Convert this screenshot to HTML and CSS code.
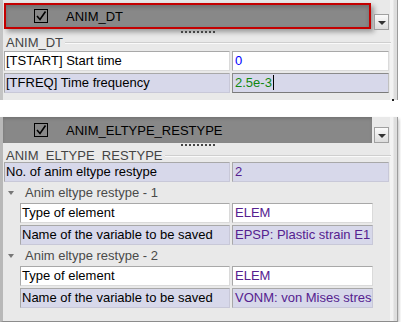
FILE: index.html
```html
<!DOCTYPE html>
<html lang="en">
<head>
    <meta charset="UTF-8">
    <title>Animation settings</title>
    <link rel="stylesheet" href="styles.css">
</head>
<body>

<div class="panel panel-first">
    <div class="panel-head">
        <div class="title-bar selected">
            <svg class="check" width="14" height="14" viewBox="0 0 14 14">
                <rect x="0.5" y="0.5" width="13" height="13" fill="none" stroke="#000"/>
                <path d="M3 7 L6 10.5 L11.5 2.5" fill="none" stroke="#000" stroke-width="1.6"/>
            </svg>
            <span>ANIM_DT</span>
        </div>
        <div class="drop"><span class="arrow"></span></div>
    </div>
    <div class="grip"></div>
    <div class="legend"><span>ANIM_DT</span></div>
    <div class="rows">
        <div class="row">
            <div class="cell">[TSTART] Start time</div>
            <div class="cell value blue">0</div>
        </div>
        <div class="row alt">
            <div class="cell">[TFREQ] Time frequency</div>
            <div class="cell value green focus">2.5e-3<span class="caret"></span></div>
        </div>
    </div>
    <div class="corner"></div>
</div>

<div class="panel panel-second">
    <div class="panel-head">
        <div class="title-bar">
            <svg class="check" width="14" height="14" viewBox="0 0 14 14">
                <rect x="0.5" y="0.5" width="13" height="13" fill="none" stroke="#000"/>
                <path d="M3 7 L6 10.5 L11.5 2.5" fill="none" stroke="#000" stroke-width="1.6"/>
            </svg>
            <span>ANIM_ELTYPE_RESTYPE</span>
        </div>
        <div class="drop"><span class="arrow"></span></div>
    </div>
    <div class="grip"></div>
    <div class="legend"><span>ANIM_ELTYPE_RESTYPE</span></div>
    <div class="rows">
        <div class="row alt">
            <div class="cell">No. of anim eltype restype</div>
            <div class="cell value purple">2</div>
        </div>

        <div class="sub-head"><span class="tri"></span>Anim eltype restype - 1</div>
        <div class="row nested">
            <div class="cell">Type of element</div>
            <div class="cell value purple">ELEM</div>
        </div>
        <div class="row nested alt">
            <div class="cell">Name of the variable to be saved</div>
            <div class="cell value purple">EPSP: Plastic strain E1</div>
        </div>

        <div class="sub-head"><span class="tri"></span>Anim eltype restype - 2</div>
        <div class="row nested">
            <div class="cell">Type of element</div>
            <div class="cell value purple">ELEM</div>
        </div>
        <div class="row nested alt">
            <div class="cell">Name of the variable to be saved</div>
            <div class="cell value purple">VONM: von Mises stress</div>
        </div>
    </div>
</div>

</body>
</html>
```

FILE: styles.css
```css
body {
    margin: 0;
    background: #fff;
    font-family: "Liberation Sans", Arial, sans-serif;
    font-size: 13px;
    color: #000;
}

.panel {
    position: relative;
    width: 394px;
    display: flex;
    flex-direction: column;
    border-left: 3px solid #c4c4c4;
    border-right: 1px solid #9c9c9c;
    background: linear-gradient(to right, #e9e9e9 387px, #f3f3f3 387px, #f3f3f3 390px, #dedede 391px);
}

.panel-first {
    padding-top: 3px;
    height: 97px;
}

.panel-second {
    margin-top: 17px;
    height: 204px;
    border-left-color: #b8b8b8;
    border-bottom: 1px solid #8c8c8c;
    box-shadow: 1px 2px 3px rgba(0, 0, 0, 0.25);
}

.panel-head {
    display: flex;
    align-items: flex-end;
}

.title-bar {
    width: 369px;
    height: 26px;
    box-sizing: border-box;
    display: flex;
    align-items: center;
    background: #888;
    box-shadow: inset 0 2px 3px rgba(0, 0, 0, 0.15);
    font-size: 13px;
    color: #000;
}

.title-bar.selected {
    width: 367px;
    margin-left: 1px;
    border: 2px solid #c40000;
    box-shadow: inset 0 2px 4px rgba(0, 0, 0, 0.2), 3px 3px 5px rgba(0, 0, 0, 0.35);
}

.check {
    margin-left: 31px;
    margin-right: 18px;
}

.title-bar.selected .check {
    margin-left: 28px;
}

.drop {
    width: 15px;
    height: 16px;
    box-sizing: border-box;
    margin-left: 2px;
    border: 1px solid #a0a0a0;
    background: linear-gradient(#fafafa, #dcdcdc);
    display: flex;
    justify-content: center;
    align-items: center;
}

.panel-first .drop {
    margin-left: 3px;
    margin-bottom: -1px;
}

.arrow {
    width: 0;
    height: 0;
    margin-top: 2px;
    border-left: 4px solid transparent;
    border-right: 4px solid transparent;
    border-top: 4px solid #333;
}

.grip {
    width: 35px;
    height: 2px;
    margin: 2px 0 0 178px;
    background: repeating-linear-gradient(to right, #444 0, #444 2px, transparent 2px, transparent 4px);
}

.panel-second .grip {
    margin-top: 1px;
}

.legend {
    display: flex;
    align-items: center;
    margin: 2px 0 0 3px;
    width: 385px;
    height: 15px;
    color: #444;
}

.legend::after {
    content: "";
    flex: 1;
    margin-left: 2px;
    border-top: 1px solid #cfcfcf;
    border-bottom: 1px solid #fafafa;
}

.rows {
    display: flex;
    flex-direction: column;
    gap: 2px;
    margin: 0 0 0 1px;
}

.panel-first .rows {
    margin-top: 1px;
}

.panel-second .rows {
    margin-top: -1px;
}

.row {
    display: grid;
    grid-template-columns: 226px 157px;
    column-gap: 2px;
    height: 20px;
}

.row.nested {
    margin-left: 16px;
    grid-template-columns: 210px 141px;
}

.cell {
    box-sizing: border-box;
    height: 20px;
    line-height: 18px;
    padding-left: 1px;
    background: #fff;
    border: 1px solid;
    border-color: #a8a8a8 #dadada #dadada #a8a8a8;
    white-space: nowrap;
    overflow: hidden;
}

.row.alt .cell {
    background: #d7d8ea;
    border-color: #a8a8a8 #c8c8d8 #c8c8d8 #a8a8a8;
}

.value {
    padding-left: 2px;
}

.blue { color: #0000ff; }
.green { color: #118811; }
.purple { color: #55218f; }

.row.alt .cell.focus {
    border-color: #8a8a8a #c0c0c0 #7a7a7a #8a8a8a;
}

.caret {
    display: inline-block;
    width: 1px;
    height: 15px;
    margin-left: 1px;
    vertical-align: -3px;
    background: #000;
}

.sub-head {
    height: 17px;
    display: flex;
    align-items: center;
    color: #4a4a4a;
    padding-left: 4px;
}

.tri {
    width: 0;
    height: 0;
    margin-right: 11px;
    margin-top: 1px;
    border-left: 3px solid transparent;
    border-right: 3px solid transparent;
    border-top: 4px solid #777;
}

.corner {
    position: absolute;
    right: 3px;
    bottom: -1px;
    width: 2px;
    height: 2px;
    background: #222;
}
```
